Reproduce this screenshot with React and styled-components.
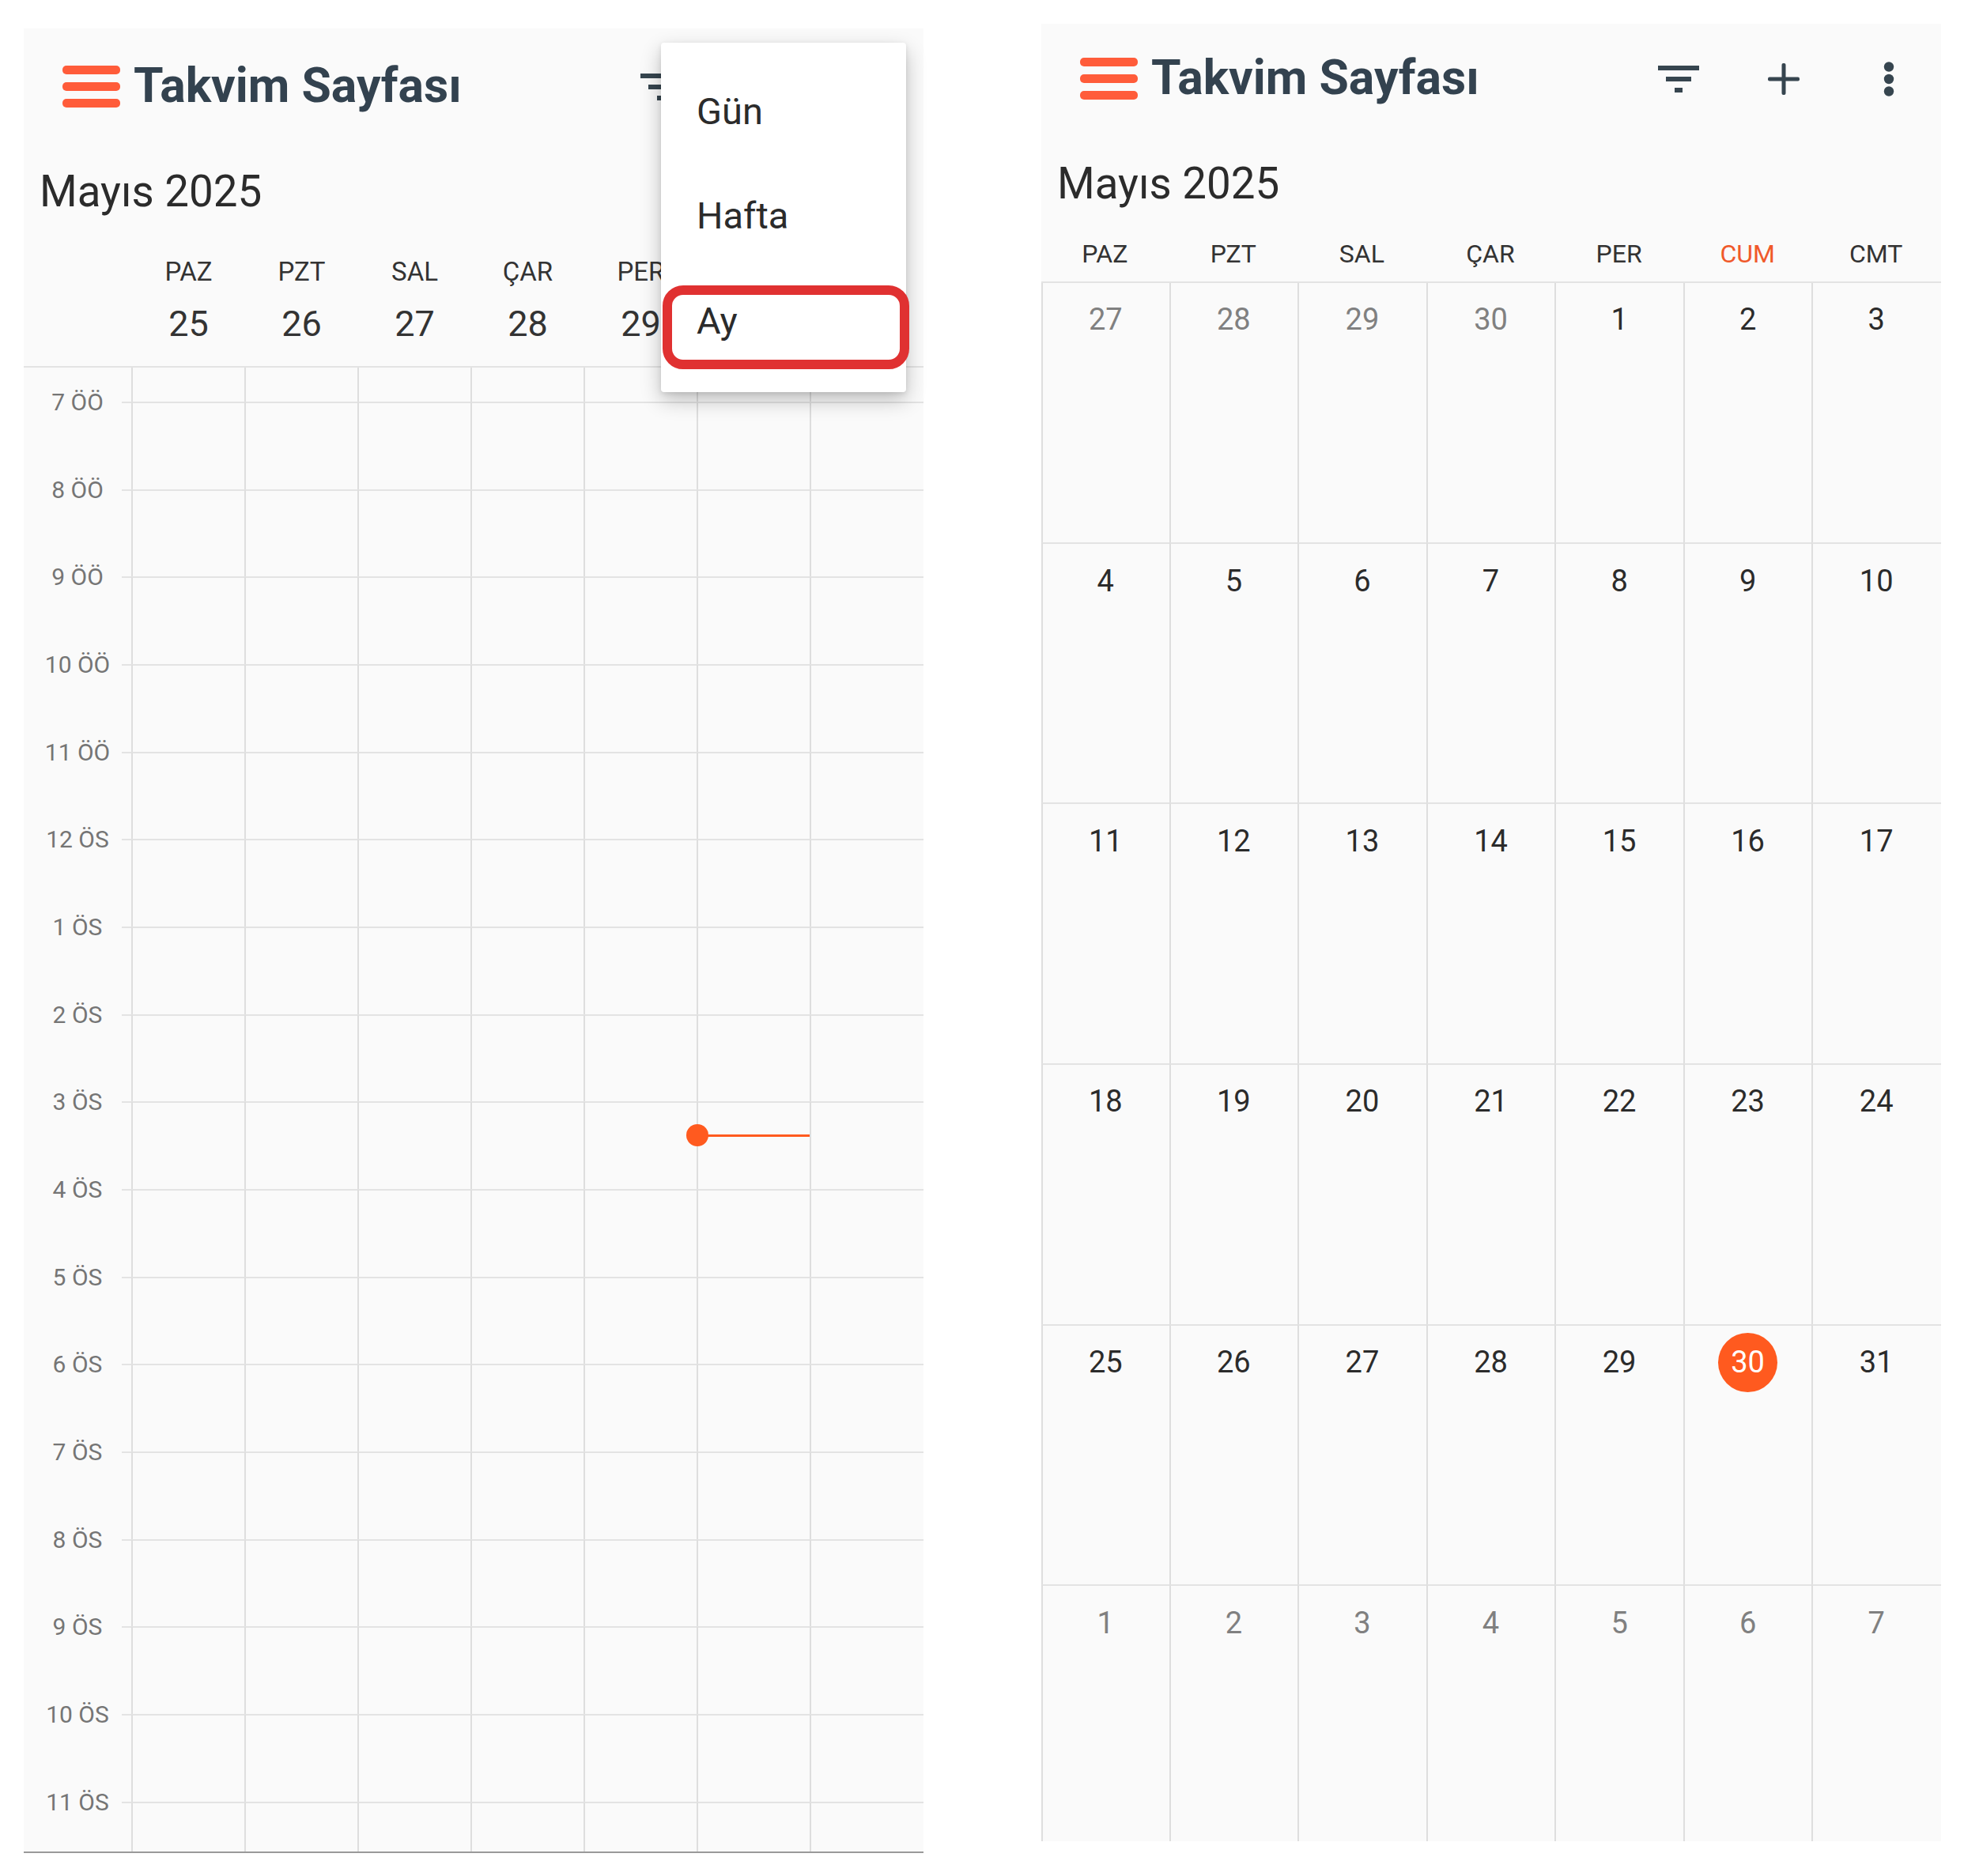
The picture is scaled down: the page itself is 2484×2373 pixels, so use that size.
import React from "react";
import styled, { createGlobalStyle } from "styled-components";

const ORANGE = "#ff5a1f";
const LINE = "#e3e3e3";
const RULE = "#dedede";

const GlobalStyle = createGlobalStyle`
  html, body {
    margin: 0;
    background: #fff;
  }
  body {
    font-family: Roboto, "Liberation Sans", sans-serif;
  }
`;

const Page = styled.div`
  width: 2484px;
  height: 2373px;
  padding: 30px 0 0 30px;
  box-sizing: border-box;
  display: flex;
  align-items: flex-start;
  gap: 149px;
  overflow: hidden;
`;

const Panel = styled.section`
  position: relative;
  width: 1138px;
  flex: none;
  background: #fafafa;
  margin-top: ${(p) => p.$top || 0}px;
  padding-top: ${(p) => p.$pad || 0}px;
`;

const AppBar = styled.header`
  height: 139px;
  display: flex;
  align-items: center;
  padding-left: 49px;
`;

const Burger = styled.div`
  width: 73px;
  height: 53px;
  flex: none;
  display: flex;
  flex-direction: column;
  justify-content: space-between;
  span {
    height: 11px;
    border-radius: 5px;
    background: #ff5c3a;
  }
`;

const Title = styled.h1`
  margin: -1px 0 0 17px;
  font-size: 60.7px;
  font-weight: 700;
  line-height: 1;
  color: #33424f;
  white-space: nowrap;
`;

const Actions = styled.div`
  margin-left: auto;
  display: flex;
`;

const IconButton = styled.div`
  width: 133px;
  height: 60px;
  display: flex;
  align-items: center;
  justify-content: center;
  svg {
    display: block;
  }
`;

const MonthRow = styled.div`
  height: 110px;
  padding: 31px 0 0 20px;
  box-sizing: border-box;
  font-size: 54.7px;
  line-height: 64px;
  color: #2b2b2b;
`;

const WeekHead = styled.div`
  height: 176px;
  display: grid;
  grid-template-columns: 137px repeat(7, 143px);
  border-bottom: 2px solid ${LINE};
  box-sizing: border-box;
`;

const WeekHeadDay = styled.div`
  padding-top: 35px;
  text-align: center;
  color: #333;
`;

const WeekDayName = styled.div`
  font-size: 33px;
  line-height: 40px;
`;

const WeekDayNumber = styled.div`
  margin-top: 20px;
  font-size: 45px;
  line-height: 52px;
`;

const WeekBody = styled.div`
  border-bottom: 2px solid #9a9a9a;
`;

const HourRow = styled.div`
  position: relative;
  display: grid;
  grid-template-columns: 136px repeat(7, 143px) 1px;
  height: ${(p) => p.$height}px;
  ${(p) =>
    p.$ruled &&
    `&::before {
      content: "";
      position: absolute;
      left: 124px;
      right: 0;
      top: -1px;
      height: 2px;
      background: ${LINE};
    }`}
`;

const HourLabel = styled.div`
  position: relative;
  height: 0;
  text-align: center;
  font-size: 30px;
  line-height: 0;
  color: #757575;
  white-space: nowrap;
`;

const HourCell = styled.div`
  position: relative;
  border-left: 2px solid ${RULE};
`;

const NowMarker = styled.div`
  position: absolute;
  left: -1px;
  top: 42px;
  width: 143px;
  height: 3px;
  margin-top: -1px;
  background: ${ORANGE};
  &::before {
    content: "";
    position: absolute;
    left: -14px;
    top: -13px;
    width: 28px;
    height: 28px;
    border-radius: 50%;
    background: ${ORANGE};
  }
`;

const Menu = styled.div`
  position: absolute;
  left: 806px;
  top: 18px;
  width: 310px;
  height: 442px;
  padding-top: 20px;
  box-sizing: border-box;
  background: #fff;
  border-radius: 4px;
  box-shadow: 0 10px 26px rgba(0, 0, 0, 0.24), 0 2px 6px rgba(0, 0, 0, 0.1);
`;

const MenuItem = styled.div`
  position: relative;
  height: 132.5px;
  display: flex;
  align-items: center;
  padding-left: 45px;
  font-size: 47px;
  color: #2b2b2b;
  ${(p) =>
    p.$marked &&
    `&::after {
      content: "";
      position: absolute;
      left: 2px;
      right: -4px;
      top: 22px;
      bottom: 5px;
      border: 12px solid #e03131;
      border-radius: 26px;
    }`}
`;

const MonthHead = styled.div`
  height: 79px;
  display: grid;
  grid-template-columns: repeat(7, 1fr);
  border-bottom: 2px solid ${LINE};
  box-sizing: border-box;
`;

const MonthHeadDay = styled.div`
  padding: 23px 2px 0 0;
  text-align: center;
  font-size: 32px;
  line-height: 38px;
  color: ${(p) => (p.$today ? "#f0592b" : "#333")};
`;

const MonthGrid = styled.div`
  display: grid;
  grid-template-columns: repeat(7, 1fr);
  grid-template-rows: 328px 329px 329.5px 330px 329.5px 325px;
`;

const DayCell = styled.div`
  display: flex;
  justify-content: center;
  align-items: flex-start;
  border-left: 2px solid ${RULE};
  border-top: ${(p) => (p.$first ? 0 : `2px solid ${LINE}`)};
  margin-left: -1px;
  &:nth-child(7n + 1) {
    margin-left: 0;
  }
`;

const DayNumber = styled.div`
  width: 75px;
  height: 75px;
  margin: ${(p) => (p.$first ? 8 : 9)}px 0 0 -2px;
  display: flex;
  align-items: center;
  justify-content: center;
  border-radius: 50%;
  font-size: 38px;
  color: ${(p) => (p.$today ? "#fff" : p.$muted ? "#808080" : "#2b2b2b")};
  background: ${(p) => (p.$today ? ORANGE : "transparent")};
`;

const ICON = "#36454f";

const FilterIcon = () => (
  <svg width="52" height="36" viewBox="0 0 52 36" fill={ICON}>
    <rect x="0" y="1" width="52" height="6" />
    <rect x="10" y="15" width="32" height="6" />
    <rect x="21" y="29" width="10" height="6" />
  </svg>
);

const PlusIcon = () => (
  <svg width="40" height="40" viewBox="0 0 40 40" fill={ICON}>
    <rect x="17.5" y="0" width="5" height="40" rx="2" />
    <rect x="0" y="17.5" width="40" height="5" rx="2" />
  </svg>
);

const DotsIcon = () => (
  <svg width="14" height="44" viewBox="0 0 14 44" fill={ICON}>
    <circle cx="7" cy="6.5" r="6.2" />
    <circle cx="7" cy="22" r="6.2" />
    <circle cx="7" cy="37.5" r="6.2" />
  </svg>
);

const TopBar = () => (
  <AppBar>
    <Burger>
      <span />
      <span />
      <span />
    </Burger>
    <Title>Takvim Sayfası</Title>
    <Actions>
      <IconButton>
        <FilterIcon />
      </IconButton>
      <IconButton>
        <PlusIcon />
      </IconButton>
      <IconButton>
        <DotsIcon />
      </IconButton>
    </Actions>
  </AppBar>
);

const weekDays = ["PAZ", "PZT", "SAL", "ÇAR", "PER", "CUM", "CMT"];
const weekDates = [25, 26, 27, 28, 29, 30, 31];
const hours = [
  "7 ÖÖ", "8 ÖÖ", "9 ÖÖ", "10 ÖÖ", "11 ÖÖ", "12 ÖS", "1 ÖS", "2 ÖS", "3 ÖS",
  "4 ÖS", "5 ÖS", "6 ÖS", "7 ÖS", "8 ÖS", "9 ÖS", "10 ÖS", "11 ÖS",
];

const monthDays = [
  ...[27, 28, 29, 30].map((d) => ({ d, muted: true })),
  ...Array.from({ length: 31 }, (_, i) => ({ d: i + 1 })),
  ...[1, 2, 3, 4, 5, 6, 7].map((d) => ({ d, muted: true })),
];

const WeekView = () => (
  <Panel $top={6} $pad={4}>
    <TopBar />
    <MonthRow>Mayıs 2025</MonthRow>
    <WeekHead>
      <div />
      {weekDays.map((name, i) => (
        <WeekHeadDay key={name}>
          <WeekDayName>{name}</WeekDayName>
          <WeekDayNumber>{weekDates[i]}</WeekDayNumber>
        </WeekHeadDay>
      ))}
    </WeekHead>
    <WeekBody>
      <HourRow $height={44}>
        <div />
        {weekDays.map((name) => (
          <HourCell key={name} />
        ))}
      </HourRow>
      {hours.map((hour, h) => (
        <HourRow key={hour} $ruled $height={h === hours.length - 1 ? 62 : 110.67}>
          <HourLabel>{hour}</HourLabel>
          {weekDays.map((name, i) => (
            <HourCell key={name}>{hour === "3 ÖS" && i === 5 && <NowMarker />}</HourCell>
          ))}
        </HourRow>
      ))}
    </WeekBody>
    <Menu>
      <MenuItem>Gün</MenuItem>
      <MenuItem>Hafta</MenuItem>
      <MenuItem $marked>Ay</MenuItem>
    </Menu>
  </Panel>
);

const MonthView = () => (
  <Panel>
    <TopBar />
    <MonthRow>Mayıs 2025</MonthRow>
    <MonthHead>
      {weekDays.map((name) => (
        <MonthHeadDay key={name} $today={name === "CUM"}>
          {name}
        </MonthHeadDay>
      ))}
    </MonthHead>
    <MonthGrid>
      {monthDays.map(({ d, muted }, i) => (
        <DayCell key={i} $first={i < 7}>
          <DayNumber $first={i < 7} $muted={muted} $today={!muted && d === 30}>
            {d}
          </DayNumber>
        </DayCell>
      ))}
    </MonthGrid>
  </Panel>
);

export default function App() {
  return (
    <>
      <GlobalStyle />
      <Page>
        <WeekView />
        <MonthView />
      </Page>
    </>
  );
}
